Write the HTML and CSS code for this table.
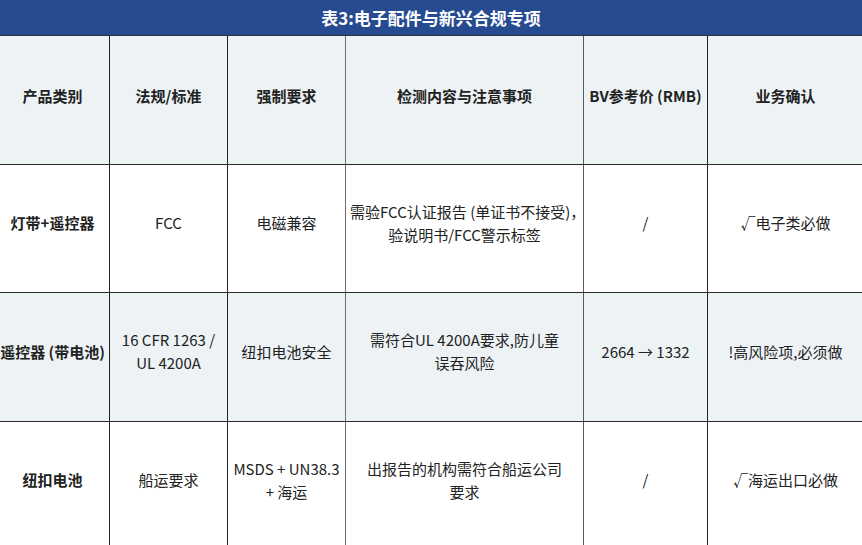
FILE: index.html
```html
<!DOCTYPE html>
<html lang="zh-CN">
<head>
<meta charset="utf-8">
<title>表3:电子配件与新兴合规专项</title>
<link rel="stylesheet" href="styles.css">
</head>
<body>
<div class="page">
  <div class="title">表3:电子配件与新兴合规专项</div>
  <table class="grid">
    <colgroup>
      <col class="w1"><col class="w2"><col class="w3"><col class="w4"><col class="w5"><col class="w6">
    </colgroup>
    <thead>
      <tr class="row-head">
        <th class="c1">产品类别</th>
        <th class="c2">法规/标准</th>
        <th class="c3">强制要求</th>
        <th class="c4">检测内容与注意事项</th>
        <th class="c5">BV参考价 (RMB)</th>
        <th class="c6">业务确认</th>
      </tr>
    </thead>
    <tbody>
      <tr class="row-a">
        <td class="c1 strong">灯带+遥控器</td>
        <td class="c2">FCC</td>
        <td class="c3">电磁兼容</td>
        <td class="c4">需验FCC认证报告 (单证书不接受)，<br>验说明书/FCC警示标签</td>
        <td class="c5">/</td>
        <td class="c6">√电子类必做</td>
      </tr>
      <tr class="row-b">
        <td class="c1 strong">遥控器 (带电池)</td>
        <td class="c2">16 CFR 1263 /<br>UL 4200A</td>
        <td class="c3">纽扣电池安全</td>
        <td class="c4">需符合UL 4200A要求,防儿童<br>误吞风险</td>
        <td class="c5">2664 → 1332</td>
        <td class="c6">!高风险项,必须做</td>
      </tr>
      <tr class="row-c">
        <td class="c1 strong">纽扣电池</td>
        <td class="c2">船运要求</td>
        <td class="c3">MSDS + UN38.3<br>+ 海运</td>
        <td class="c4">出报告的机构需符合船运公司<br>要求</td>
        <td class="c5">/</td>
        <td class="c6">√海运出口必做</td>
      </tr>
    </tbody>
  </table>
</div>
</body>
</html>
```
FILE: styles.css
```css
html, body {
  margin: 0;
  padding: 0;
  background: #ffffff;
}

body {
  width: 862px;
  height: 545px;
  overflow: hidden;
  font-family: "Noto Sans CJK SC", "Noto Sans", sans-serif;
  color: #222222;
}

.page {
  width: 862px;
}

.title {
  height: 35px;
  line-height: 35px;
  background: #264b91;
  border-bottom: 1px solid #2b3340;
  color: #ffffff;
  font-size: 17px;
  font-weight: 700;
  text-align: center;
}

.grid {
  margin-left: -6px;
  width: 869px;
  table-layout: fixed;
  border-collapse: separate;
  border-spacing: 0;
  font-size: 15px;
  line-height: 23px;
}

.w1 { width: 116px; }
.w2 { width: 118px; }
.w3 { width: 118px; }
.w4 { width: 238px; }
.w5 { width: 124px; }
.w6 { width: 155px; }

.grid th,
.grid td {
  box-sizing: border-box;
  padding: 0 4px 12px;
  text-align: center;
  vertical-align: middle;
  border-right: 1px solid #222222;
  border-bottom: 1px solid #2a2a2a;
  white-space: nowrap;
  overflow: hidden;
}

.grid th {
  font-weight: 700;
  padding-bottom: 9px;
}

.grid .c1 { padding-left: 6px; }
.grid .c3 { border-right-color: #6e6e6e; }
.grid .c4 { border-right-color: #5a5a5a; }
.grid .c6 { border-right: none; }

.strong {
  font-weight: 700;
}

.row-head { height: 129px; background: #edf2f5; }
.row-a { height: 128px; background: #ffffff; }
.row-b { height: 129px; background: #edf2f5; }
.row-c { height: 128px; background: #ffffff; }
```
